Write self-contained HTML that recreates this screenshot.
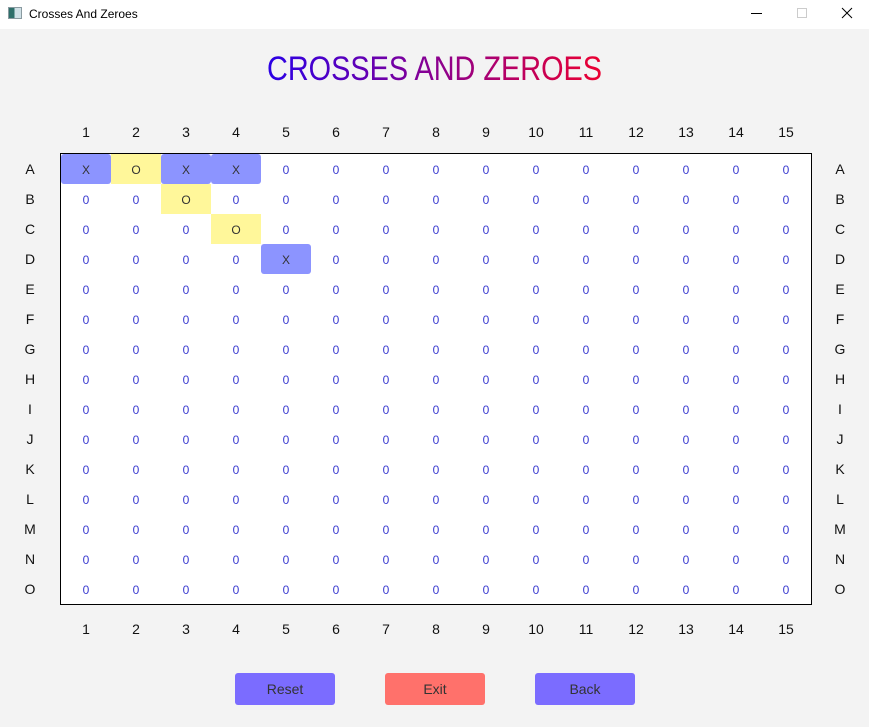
<!DOCTYPE html>
<html><head><meta charset="utf-8"><style>
*{margin:0;padding:0;box-sizing:border-box}
body{width:869px;height:727px;background:#f3f3f3;font-family:"Liberation Sans",sans-serif;position:relative;overflow:hidden}
.tb{position:absolute;left:0;top:0;width:869px;height:29px;background:#fff}
.tb .t{position:absolute;left:29px;top:7px;font-size:12px;color:#000}
.ic{position:absolute;left:8px;top:7px;width:14px;height:12px;border:1px solid #8a9aa0;background:linear-gradient(90deg,#2e6f6a 0 45%,#cfe0e6 45%)}
.hd{position:absolute;font-size:14px;color:#111;width:50px;text-align:center}
.rl{position:absolute;font-size:14px;color:#111;width:20px;text-align:center}
.grid{position:absolute;left:60px;top:153px;width:752px;height:452px;border:1px solid #000;background:#fff}
.row{display:flex;height:30px}
.row span{width:50px;height:30px;line-height:32px;text-align:center;font-size:12px;color:#3a3ad0}
.row span.x{background:#8c94ff;color:#333;border-radius:3px}
.row span.o{background:#fff79a;color:#333}
.btn{position:absolute;top:673px;width:100px;height:32px;border-radius:3px;font-size:14px;color:#333;text-align:center;line-height:32px}
</style></head><body>
<div class="tb"><div class="ic"></div><div class="t">Crosses And Zeroes</div>
<svg style="position:absolute;left:740px;top:0" width="129" height="29"><line x1="11" y1="13.5" x2="22" y2="13.5" stroke="#000"/><rect x="57.5" y="8.5" width="9" height="9" fill="none" stroke="#ccc"/><path d="M102 8L112 18M112 8L102 18" stroke="#000"/></svg></div>
<svg style="position:absolute;left:0;top:40px" width="869" height="50"><defs><linearGradient id="g" x1="267" x2="602" gradientUnits="userSpaceOnUse"><stop offset="0" stop-color="#2a00e6"/><stop offset="0.5" stop-color="#8a0090"/><stop offset="1" stop-color="#ec0030"/></linearGradient></defs><text x="267" y="40" font-size="34" textLength="335" lengthAdjust="spacingAndGlyphs" fill="url(#g)" font-family="Liberation Sans, sans-serif">CROSSES AND ZEROES</text></svg>

<div class="hd" style="left:61px;top:124px">1</div><div class="hd" style="left:111px;top:124px">2</div><div class="hd" style="left:161px;top:124px">3</div><div class="hd" style="left:211px;top:124px">4</div><div class="hd" style="left:261px;top:124px">5</div><div class="hd" style="left:311px;top:124px">6</div><div class="hd" style="left:361px;top:124px">7</div><div class="hd" style="left:411px;top:124px">8</div><div class="hd" style="left:461px;top:124px">9</div><div class="hd" style="left:511px;top:124px">10</div><div class="hd" style="left:561px;top:124px">11</div><div class="hd" style="left:611px;top:124px">12</div><div class="hd" style="left:661px;top:124px">13</div><div class="hd" style="left:711px;top:124px">14</div><div class="hd" style="left:761px;top:124px">15</div>
<div class="hd" style="left:61px;top:621px">1</div><div class="hd" style="left:111px;top:621px">2</div><div class="hd" style="left:161px;top:621px">3</div><div class="hd" style="left:211px;top:621px">4</div><div class="hd" style="left:261px;top:621px">5</div><div class="hd" style="left:311px;top:621px">6</div><div class="hd" style="left:361px;top:621px">7</div><div class="hd" style="left:411px;top:621px">8</div><div class="hd" style="left:461px;top:621px">9</div><div class="hd" style="left:511px;top:621px">10</div><div class="hd" style="left:561px;top:621px">11</div><div class="hd" style="left:611px;top:621px">12</div><div class="hd" style="left:661px;top:621px">13</div><div class="hd" style="left:711px;top:621px">14</div><div class="hd" style="left:761px;top:621px">15</div>

<div class="rl" style="left:20px;top:161px">A</div><div class="rl" style="left:20px;top:191px">B</div><div class="rl" style="left:20px;top:221px">C</div><div class="rl" style="left:20px;top:251px">D</div><div class="rl" style="left:20px;top:281px">E</div><div class="rl" style="left:20px;top:311px">F</div><div class="rl" style="left:20px;top:341px">G</div><div class="rl" style="left:20px;top:371px">H</div><div class="rl" style="left:20px;top:401px">I</div><div class="rl" style="left:20px;top:431px">J</div><div class="rl" style="left:20px;top:461px">K</div><div class="rl" style="left:20px;top:491px">L</div><div class="rl" style="left:20px;top:521px">M</div><div class="rl" style="left:20px;top:551px">N</div><div class="rl" style="left:20px;top:581px">O</div>
<div class="rl" style="left:830px;top:161px">A</div><div class="rl" style="left:830px;top:191px">B</div><div class="rl" style="left:830px;top:221px">C</div><div class="rl" style="left:830px;top:251px">D</div><div class="rl" style="left:830px;top:281px">E</div><div class="rl" style="left:830px;top:311px">F</div><div class="rl" style="left:830px;top:341px">G</div><div class="rl" style="left:830px;top:371px">H</div><div class="rl" style="left:830px;top:401px">I</div><div class="rl" style="left:830px;top:431px">J</div><div class="rl" style="left:830px;top:461px">K</div><div class="rl" style="left:830px;top:491px">L</div><div class="rl" style="left:830px;top:521px">M</div><div class="rl" style="left:830px;top:551px">N</div><div class="rl" style="left:830px;top:581px">O</div>

<div class="grid">
<div class="row"><span class="x">X</span><span class="o">O</span><span class="x">X</span><span class="x">X</span><span>0</span><span>0</span><span>0</span><span>0</span><span>0</span><span>0</span><span>0</span><span>0</span><span>0</span><span>0</span><span>0</span></div>
<div class="row"><span>0</span><span>0</span><span class="o">O</span><span>0</span><span>0</span><span>0</span><span>0</span><span>0</span><span>0</span><span>0</span><span>0</span><span>0</span><span>0</span><span>0</span><span>0</span></div>
<div class="row"><span>0</span><span>0</span><span>0</span><span class="o">O</span><span>0</span><span>0</span><span>0</span><span>0</span><span>0</span><span>0</span><span>0</span><span>0</span><span>0</span><span>0</span><span>0</span></div>
<div class="row"><span>0</span><span>0</span><span>0</span><span>0</span><span class="x">X</span><span>0</span><span>0</span><span>0</span><span>0</span><span>0</span><span>0</span><span>0</span><span>0</span><span>0</span><span>0</span></div>
<div class="row"><span>0</span><span>0</span><span>0</span><span>0</span><span>0</span><span>0</span><span>0</span><span>0</span><span>0</span><span>0</span><span>0</span><span>0</span><span>0</span><span>0</span><span>0</span></div>
<div class="row"><span>0</span><span>0</span><span>0</span><span>0</span><span>0</span><span>0</span><span>0</span><span>0</span><span>0</span><span>0</span><span>0</span><span>0</span><span>0</span><span>0</span><span>0</span></div>
<div class="row"><span>0</span><span>0</span><span>0</span><span>0</span><span>0</span><span>0</span><span>0</span><span>0</span><span>0</span><span>0</span><span>0</span><span>0</span><span>0</span><span>0</span><span>0</span></div>
<div class="row"><span>0</span><span>0</span><span>0</span><span>0</span><span>0</span><span>0</span><span>0</span><span>0</span><span>0</span><span>0</span><span>0</span><span>0</span><span>0</span><span>0</span><span>0</span></div>
<div class="row"><span>0</span><span>0</span><span>0</span><span>0</span><span>0</span><span>0</span><span>0</span><span>0</span><span>0</span><span>0</span><span>0</span><span>0</span><span>0</span><span>0</span><span>0</span></div>
<div class="row"><span>0</span><span>0</span><span>0</span><span>0</span><span>0</span><span>0</span><span>0</span><span>0</span><span>0</span><span>0</span><span>0</span><span>0</span><span>0</span><span>0</span><span>0</span></div>
<div class="row"><span>0</span><span>0</span><span>0</span><span>0</span><span>0</span><span>0</span><span>0</span><span>0</span><span>0</span><span>0</span><span>0</span><span>0</span><span>0</span><span>0</span><span>0</span></div>
<div class="row"><span>0</span><span>0</span><span>0</span><span>0</span><span>0</span><span>0</span><span>0</span><span>0</span><span>0</span><span>0</span><span>0</span><span>0</span><span>0</span><span>0</span><span>0</span></div>
<div class="row"><span>0</span><span>0</span><span>0</span><span>0</span><span>0</span><span>0</span><span>0</span><span>0</span><span>0</span><span>0</span><span>0</span><span>0</span><span>0</span><span>0</span><span>0</span></div>
<div class="row"><span>0</span><span>0</span><span>0</span><span>0</span><span>0</span><span>0</span><span>0</span><span>0</span><span>0</span><span>0</span><span>0</span><span>0</span><span>0</span><span>0</span><span>0</span></div>
<div class="row"><span>0</span><span>0</span><span>0</span><span>0</span><span>0</span><span>0</span><span>0</span><span>0</span><span>0</span><span>0</span><span>0</span><span>0</span><span>0</span><span>0</span><span>0</span></div>
</div>

<div class="btn" style="left:235px;background:#7b6cff">Reset</div>
<div class="btn" style="left:385px;background:#ff716b">Exit</div>
<div class="btn" style="left:535px;background:#7b6cff">Back</div>
</body></html>
